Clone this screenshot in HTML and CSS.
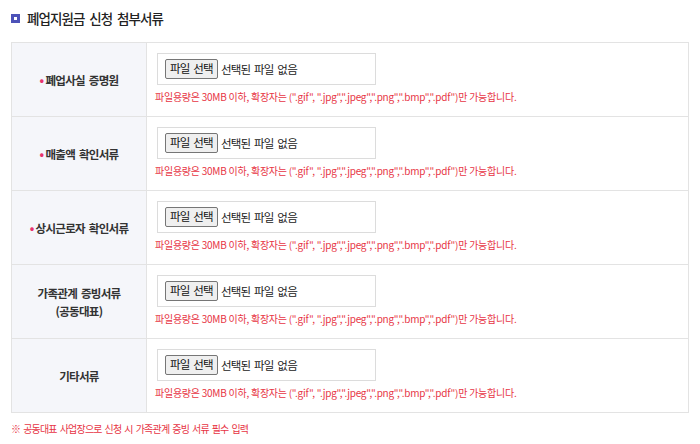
FILE: index.html
```html
<html>
<head>
  <meta charset="utf-8">
  <link rel="stylesheet" href="styles.css">
</head>
<body>
  <h3 class="title"><span class="title-icon"></span>폐업지원금 신청 첨부서류</h3>
  <table class="attach">
    <tr>
      <th><span class="req">•</span>폐업사실 증명원</th>
      <td>
        <div class="file-box"><span class="file-btn">파일 선택</span><span class="file-name">선택된 파일 없음</span></div>
        <p class="desc">파일용량은 30MB 이하, 확장자는 (".gif", ".jpg",".jpeg",".png",".bmp",".pdf")만 가능합니다.</p>
      </td>
    </tr>
    <tr>
      <th><span class="req">•</span>매출액 확인서류</th>
      <td>
        <div class="file-box"><span class="file-btn">파일 선택</span><span class="file-name">선택된 파일 없음</span></div>
        <p class="desc">파일용량은 30MB 이하, 확장자는 (".gif", ".jpg",".jpeg",".png",".bmp",".pdf")만 가능합니다.</p>
      </td>
    </tr>
    <tr>
      <th><span class="req">•</span>상시근로자 확인서류</th>
      <td>
        <div class="file-box"><span class="file-btn">파일 선택</span><span class="file-name">선택된 파일 없음</span></div>
        <p class="desc">파일용량은 30MB 이하, 확장자는 (".gif", ".jpg",".jpeg",".png",".bmp",".pdf")만 가능합니다.</p>
      </td>
    </tr>
    <tr>
      <th>가족관계 증빙서류<br>(공동대표)</th>
      <td>
        <div class="file-box"><span class="file-btn">파일 선택</span><span class="file-name">선택된 파일 없음</span></div>
        <p class="desc">파일용량은 30MB 이하, 확장자는 (".gif", ".jpg",".jpeg",".png",".bmp",".pdf")만 가능합니다.</p>
      </td>
    </tr>
    <tr>
      <th>기타서류</th>
      <td>
        <div class="file-box"><span class="file-btn">파일 선택</span><span class="file-name">선택된 파일 없음</span></div>
        <p class="desc">파일용량은 30MB 이하, 확장자는 (".gif", ".jpg",".jpeg",".png",".bmp",".pdf")만 가능합니다.</p>
      </td>
    </tr>
  </table>
  <p class="note">※ 공동대표 사업장으로 신청 시 가족관계 증빙 서류 필수 입력</p>
</body>
</html>
```

FILE: styles.css
```css
body {
  margin: 0;
  padding: 0 11px;
  font-family: "Noto Sans CJK KR", "Noto Sans", sans-serif;
  color: #222;
  background: #fff;
}
.title {
  display: flex;
  align-items: center;
  margin: 0;
  height: 36px;
  font-size: 13.5px;
  font-weight: 500;
  letter-spacing: -0.9px;
  word-spacing: 2.5px;
  color: #222;
}
.title-icon {
  width: 3px;
  height: 3px;
  border: 3px solid #4d52b8;
  background: #fff;
  margin: 0 7px 0 0;
}
.attach {
  width: 678px;
  margin-top: 6px;
  border-collapse: collapse;
  border: 1px solid #e3e3e3;
}
.attach tr {
  height: 74px;
}
.attach th {
  width: 132px;
  background: #f5f6fa;
  border: 1px solid #e3e3e3;
  font-size: 11.5px;
  font-weight: 700;
  letter-spacing: -0.7px;
  word-spacing: 2px;
  color: #333;
  line-height: 18px;
}
.attach td {
  border: 1px solid #e3e3e3;
  padding: 10px 9px 0 10px;
  vertical-align: top;
}
.req {
  color: #e8336d;
  font-size: 12px;
  margin-right: 2px;
}
.file-box {
  display: flex;
  align-items: center;
  width: 210px;
  height: 30px;
  border: 1px solid #dcdcdc;
  padding-left: 7px;
}
.file-btn {
  display: inline-block;
  height: 18px;
  line-height: 17px;
  padding: 0 4px;
  border: 1px solid #767676;
  border-radius: 2px;
  background: #efefef;
  font-size: 11.5px;
  letter-spacing: -0.8px;
  word-spacing: 2px;
  color: #111;
}
.file-name {
  margin-left: 3px;
  font-size: 11.5px;
  letter-spacing: -0.8px;
  word-spacing: 2px;
  color: #222;
}
.desc {
  margin: 4px 0 0 -2px;
  font-size: 10px;
  line-height: 16px;
  color: #e73545;
  letter-spacing: -0.25px;
}
.note {
  margin: 8px 0 0;
  font-size: 10px;
  color: #e73545;
  letter-spacing: -0.8px;
  word-spacing: 1.5px;
}
```
